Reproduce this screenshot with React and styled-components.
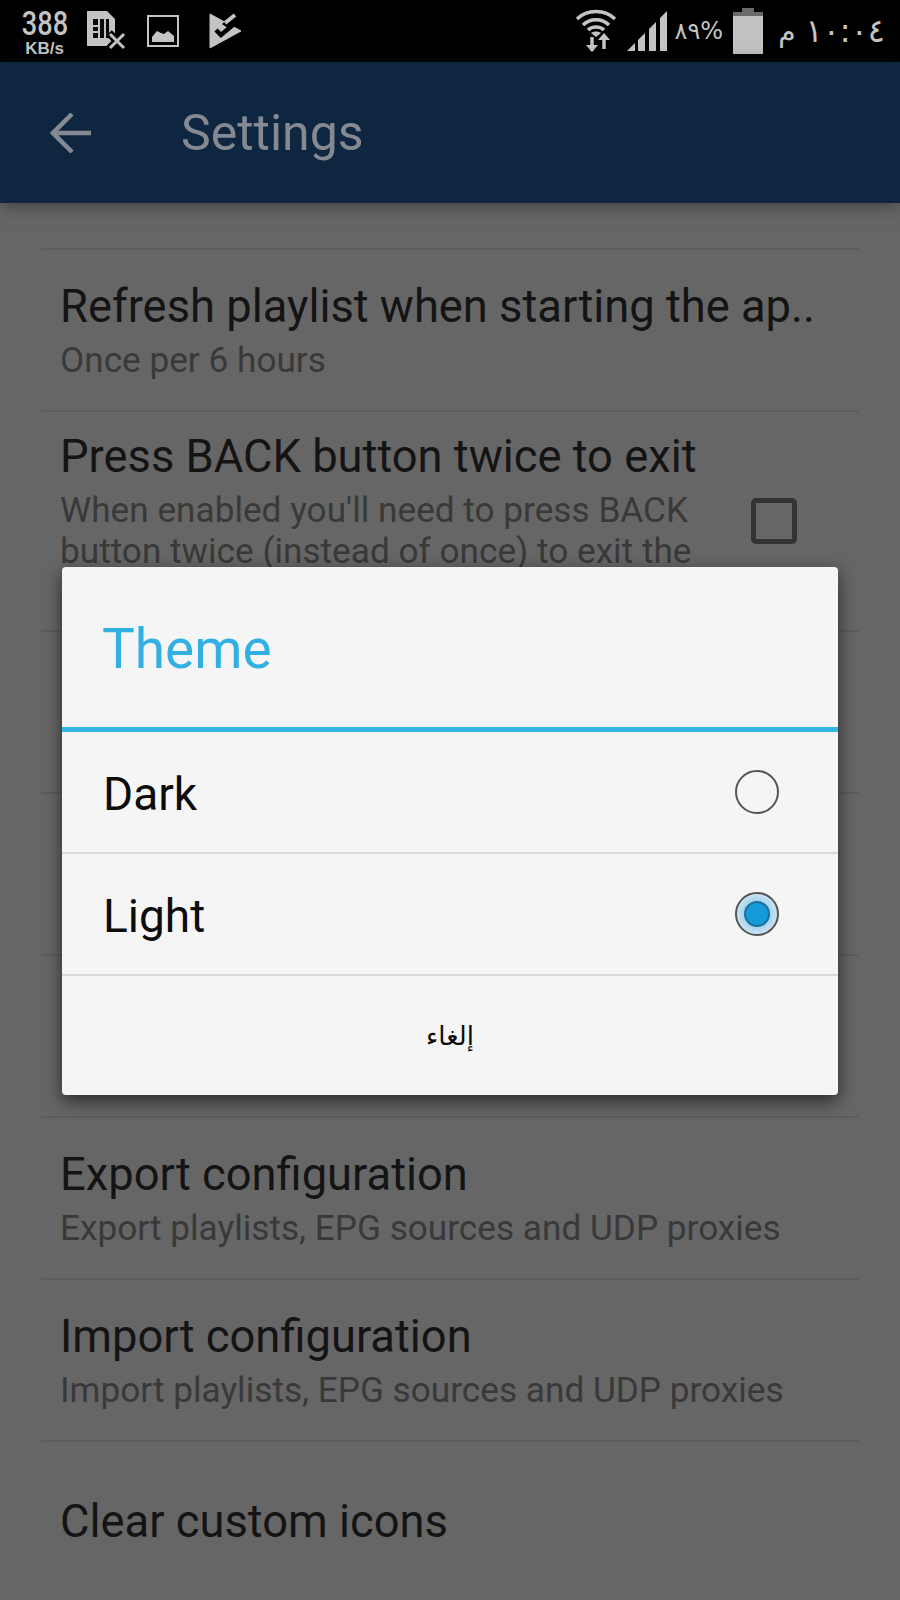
import React from "react";
import styled, { createGlobalStyle } from "styled-components";

const GlobalStyle = createGlobalStyle`
  body {
    margin: 0;
    background: #666666;
    font-family: Roboto, "Liberation Sans", sans-serif;
  }
`;

const Screen = styled.div`
  position: relative;
  width: 900px;
  height: 1600px;
  overflow: hidden;
  background: #666666;
`;

const StatusBar = styled.div`
  display: flex;
  justify-content: space-between;
  align-items: center;
  height: 62px;
  background: #000;
  color: #c4c4c4;
`;

const StatusGroup = styled.div`
  display: flex;
  align-items: center;
  gap: ${(p) => p.$gap}px;
  padding: ${(p) => p.$padding};
`;

const Speed = styled.div`
  display: flex;
  flex-direction: column;
  align-items: center;
  width: 43px;
  padding-top: 2px;
  font-family: Roboto, sans-serif;
  font-weight: 500;
`;

const SpeedValue = styled.span`
  font-size: 34px;
  line-height: 30px;
  transform: scaleX(0.8);
`;

const SpeedUnit = styled.span`
  margin-top: 3px;
  font-family: "Liberation Sans", sans-serif;
  font-weight: 700;
  font-size: 17px;
  line-height: 16px;
  white-space: nowrap;
`;

const StatusText = styled.span`
  margin-left: ${(p) => p.$inset || 0}px;
  font-family: "DejaVu Sans", sans-serif;
  font-size: ${(p) => p.$size}px;
  direction: ltr;
  unicode-bidi: bidi-override;
  white-space: nowrap;
`;

const AppBar = styled.header`
  position: relative;
  display: flex;
  align-items: center;
  height: 141px;
  padding-left: 50px;
  background: #0f2640;
  color: #858a92;
  box-shadow: 0 2px 16px rgba(30, 30, 30, 0.55);
`;

const AppTitle = styled.h1`
  margin: 0 0 0 89px;
  font-size: 50px;
  font-weight: 400;
`;

const List = styled.div`
  padding: 45px 41px 0;
`;

const Row = styled.div`
  display: flex;
  align-items: center;
  justify-content: space-between;
  box-sizing: border-box;
  height: ${(p) => p.$height || 162}px;
  padding: 0 20px 0 19px;
  border-top: 2px solid #5d5d5d;
`;

const RowText = styled.div`
  display: flex;
  flex-direction: column;
  flex: 1;
`;

const RowTitle = styled.div`
  font-size: 45.3px;
  line-height: 67px;
  color: #141414;
  white-space: nowrap;
`;

const RowHint = styled.div`
  margin-bottom: 6px;
  font-size: 35.2px;
  line-height: 41px;
  color: #393939;
  max-width: ${(p) => (p.$wrap ? "640px" : "none")};
  white-space: ${(p) => (p.$wrap ? "normal" : "nowrap")};
`;

const Checkbox = styled.div`
  width: 36px;
  height: 36px;
  margin-right: 42px;
  border: 5px solid #333333;
  border-radius: 5px;
`;

const Scrim = styled.div`
  position: absolute;
  inset: 62px 0 0;
  display: flex;
  align-items: center;
  justify-content: center;
`;

const Dialog = styled.div`
  width: 776px;
  background: #f5f5f5;
  border-radius: 4px;
  box-shadow: 0 6px 18px rgba(0, 0, 0, 0.6);
`;

const DialogTitle = styled.div`
  box-sizing: border-box;
  display: flex;
  align-items: center;
  height: 165px;
  padding: 4px 40px 0;
  font-size: 55px;
  color: #33b0e3;
  border-bottom: 5px solid #33b5e5;
`;

const Option = styled.div`
  box-sizing: border-box;
  display: flex;
  align-items: center;
  justify-content: space-between;
  height: 122px;
  padding: 0 59px 0 41px;
  font-size: 46px;
  color: #0c0c0c;
  border-bottom: 2px solid #d9d9d9;
`;

const OptionLabel = styled.span`
  padding-top: 4px;
`;

const Radio = styled.div`
  box-sizing: border-box;
  display: flex;
  align-items: center;
  justify-content: center;
  width: 44px;
  height: 44px;
  border: 2px solid #555555;
  border-radius: 50%;
  background: ${(p) => (p.$checked ? "radial-gradient(circle, #9fd0ec 40%, #e2eff7 90%)" : "transparent")};
`;

const RadioDot = styled.div`
  box-sizing: border-box;
  width: 26px;
  height: 26px;
  border: 2px solid #1d6f9c;
  border-radius: 50%;
  background: #159ad8;
`;

const CancelButton = styled.div`
  display: flex;
  align-items: center;
  justify-content: center;
  height: 119px;
  font-family: "DejaVu Sans", sans-serif;
  font-size: 26px;
  color: #0c0c0c;
`;

const PlayIcon = styled.svg`
  margin-left: 9px;
`;

function SimOffIcon() {
  return (
    <svg width="39" height="40" viewBox="0 0 39 40">
      <path d="M0 0H20L28 8V35H0Z" fill="#c4c4c4" />
      <rect x="6" y="8" width="16" height="19" fill="#0a0a0a" />
      <g fill="#c4c4c4">
        <rect x="11" y="8" width="2" height="19" />
        <rect x="17" y="8" width="2" height="19" />
        <rect x="6" y="14" width="5" height="2" />
        <rect x="6" y="20" width="5" height="2" />
      </g>
      <path d="M22 22L38 38M38 22L22 38" stroke="#000" strokeWidth="8" />
      <path d="M23 23L37 37M37 23L23 37" stroke="#c4c4c4" strokeWidth="3" />
    </svg>
  );
}

function PictureIcon() {
  return (
    <svg width="32" height="33" viewBox="0 0 32 33">
      <rect x="1" y="1" width="30" height="30" fill="none" stroke="#c4c4c4" strokeWidth="2" />
      <path d="M5 27V22L10 16L14 18L17 19L21 16L27 21V27Z" fill="#c4c4c4" />
    </svg>
  );
}

function PlayCheckIcon() {
  return (
    <PlayIcon width="33" height="36" viewBox="0 0 33 36">
      <path d="M1 1L32 18L1 35Z" fill="#c4c4c4" stroke="#c4c4c4" strokeLinejoin="round" />
      <path d="M13 11L27 -1V10L20 16Z" fill="#000" />
      <path d="M7 17L12 22L25 11" fill="none" stroke="#000" strokeWidth="4.5" />
      <path d="M16 10L26 2" fill="none" stroke="#c4c4c4" strokeWidth="4" />
    </PlayIcon>
  );
}

function WifiIcon() {
  return (
    <svg width="42" height="44" viewBox="0 0 42 44">
      <g fill="none" stroke="#c4c4c4" strokeWidth="3.5">
        <path d="M2 10C12 0 30 0 40 10" />
        <path d="M8 16C15 9 27 9 34 16" />
        <path d="M13 21C17 17 25 17 29 21" />
      </g>
      <path d="M16 24C19 22 23 22 26 24L21 28Z" fill="#c4c4c4" />
      <path d="M17 28V42" stroke="#c4c4c4" strokeWidth="3.5" />
      <path d="M11 36L17 43L23 36Z" fill="#c4c4c4" />
      <path d="M29 40V28" stroke="#c4c4c4" strokeWidth="3.5" />
      <path d="M23 31L29 24L35 31Z" fill="#c4c4c4" />
    </svg>
  );
}

function SignalIcon() {
  return (
    <svg width="41" height="41" viewBox="0 0 41 41">
      <path d="M0 40L8 32V40Z" fill="#c4c4c4" />
      <path d="M11 40V29L18 22V40Z" fill="#c4c4c4" />
      <path d="M22 40V18L29 11V40Z" fill="#c4c4c4" />
      <path d="M33 40V7L40 0V40Z" fill="#c4c4c4" />
    </svg>
  );
}

function BatteryIcon() {
  return (
    <svg width="30" height="46" viewBox="0 0 30 46">
      <rect x="9" y="0" width="12" height="5" fill="#6a6a6a" />
      <rect x="0" y="4" width="30" height="4" fill="#6a6a6a" />
      <rect x="0" y="8" width="30" height="38" fill="#c2c2c2" />
    </svg>
  );
}

function BackArrow() {
  return (
    <svg width="42" height="40" viewBox="0 0 42 40">
      <path d="M41 20H3M22 1L3 20L22 39" fill="none" stroke="#858a92" strokeWidth="4.5" />
    </svg>
  );
}

export default function App() {
  return (
    <Screen>
      <GlobalStyle />
      <StatusBar>
        <StatusGroup $gap={21} $padding="0 0 0 23px">
          <Speed>
            <SpeedValue>388</SpeedValue>
            <SpeedUnit>KB/s</SpeedUnit>
          </Speed>
          <SimOffIcon />
          <PictureIcon />
          <PlayCheckIcon />
        </StatusGroup>
        <StatusGroup $gap={10} $padding="0 15px 0 0">
          <WifiIcon />
          <SignalIcon />
          <StatusText $size={24} $inset={-3}>٨٩%</StatusText>
          <BatteryIcon />
          <StatusText $size={28} $inset={5}>م</StatusText>
          <StatusText $size={32}>١٠:٠٤</StatusText>
        </StatusGroup>
      </StatusBar>

      <AppBar>
        <BackArrow />
        <AppTitle>Settings</AppTitle>
      </AppBar>

      <List>
        <Row>
          <RowText>
            <RowTitle>Refresh playlist when starting the ap..</RowTitle>
            <RowHint>Once per 6 hours</RowHint>
          </RowText>
        </Row>
        <Row $height={220}>
          <RowText>
            <RowTitle>Press BACK button twice to exit</RowTitle>
            <RowHint $wrap>
              When enabled you'll need to press BACK button twice (instead of once) to exit the app.
            </RowHint>
          </RowText>
          <Checkbox />
        </Row>
        <Row />
        <Row />
        <Row />
        <Row>
          <RowText>
            <RowTitle>Export configuration</RowTitle>
            <RowHint>Export playlists, EPG sources and UDP proxies</RowHint>
          </RowText>
        </Row>
        <Row>
          <RowText>
            <RowTitle>Import configuration</RowTitle>
            <RowHint>Import playlists, EPG sources and UDP proxies</RowHint>
          </RowText>
        </Row>
        <Row $height={160}>
          <RowText>
            <RowTitle>Clear custom icons</RowTitle>
          </RowText>
        </Row>
      </List>

      <Scrim>
        <Dialog>
          <DialogTitle>Theme</DialogTitle>
          <Option>
            <OptionLabel>Dark</OptionLabel>
            <Radio />
          </Option>
          <Option>
            <OptionLabel>Light</OptionLabel>
            <Radio $checked>
              <RadioDot />
            </Radio>
          </Option>
          <CancelButton>إلغاء</CancelButton>
        </Dialog>
      </Scrim>
    </Screen>
  );
}
